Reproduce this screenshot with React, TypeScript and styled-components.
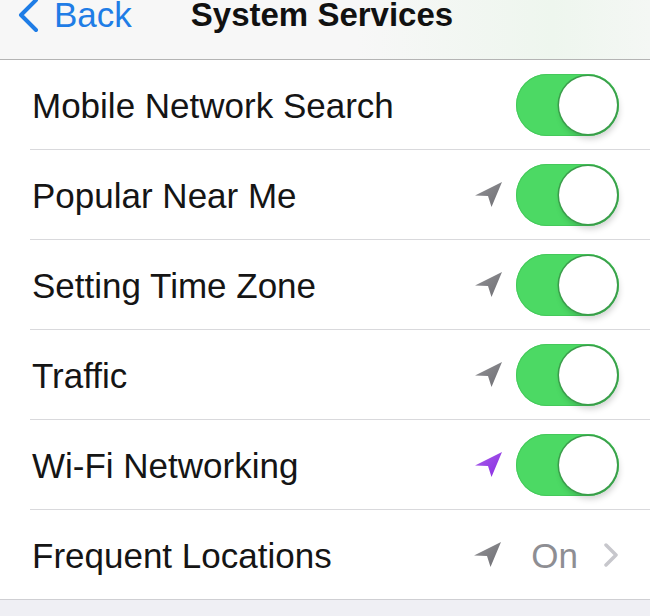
import React from "react";
import styled, { createGlobalStyle } from "styled-components";

const Global = createGlobalStyle`
  html, body { margin: 0; padding: 0; }
  body {
    background: #efeff4;
    font-family: "Liberation Sans", Arial, sans-serif;
    -webkit-font-smoothing: antialiased;
  }
`;

const Page = styled.div`
  width: 650px;
  height: 616px;
  background: #efeff4;
  overflow: hidden;
`;

const NavBar = styled.header`
  height: 59px;
  border-bottom: 1px solid #b4b4b4;
  background: linear-gradient(90deg, #f7f7f7 0%, #f7f7f7 55%, #eef6ee 85%, #f4f7f4 100%);
  display: flex;
  align-items: flex-start;
`;

const BackButton = styled.div`
  display: flex;
  align-items: flex-start;
  gap: 14px;
  padding-left: 16px;
  color: #1f7de6;
  font-size: 35px;
  line-height: 30px;
`;

const Title = styled.div`
  margin-left: 59px;
  font-size: 33px;
  font-weight: bold;
  color: #111;
  line-height: 30px;
`;

const List = styled.div`
  background: #fff;
  border-bottom: 1px solid #cfcfd3;
`;

const Row = styled.div<{ $last?: boolean }>`
  height: 89px;
  display: flex;
  align-items: center;
  padding-left: 32px;
  padding-right: 31px;
  position: relative;
  &::after {
    content: "";
    display: ${(p) => (p.$last ? "none" : "block")};
    position: absolute;
    left: 30px;
    right: 0;
    bottom: -1px;
    height: 1px;
    background: #d9d9dc;
  }
  & + & {
    margin-top: 1px;
  }
`;

const Label = styled.div`
  flex: 1;
  font-size: 35px;
  color: #151515;
  padding-top: 2px;
`;

const Accessory = styled.div`
  display: flex;
  align-items: center;
`;

const ArrowBox = styled.div<{ $gap: number }>`
  width: 30px;
  height: 28px;
  margin-right: ${(p) => p.$gap}px;
  display: flex;
`;

const Toggle = styled.div`
  width: 103px;
  height: 62px;
  border-radius: 31px;
  background: #4cd964;
  box-shadow: inset 0 0 0 1px #45c95b;
  display: flex;
  justify-content: flex-end;
  align-items: center;
`;

const Knob = styled.div`
  width: 58px;
  height: 58px;
  border-radius: 50%;
  background: #fff;
  margin-right: 2px;
  box-shadow: 0 0 0 1.5px #3a9d4a, 2px 5px 6px rgba(0, 0, 0, 0.18);
`;

const Value = styled.div`
  font-size: 35px;
  color: #8e8e93;
  margin-right: 25px;
  padding-top: 2px;
`;

const Chevron = styled.div`
  width: 16px;
  height: 24px;
  display: flex;
`;

const Arrow = ({ color }: { color: string }) => {
  const id = `g${color.replace("#", "")}`;
  return (
    <svg width="30" height="28" viewBox="0 0 30 28">
      <defs>
        <linearGradient id={id} x1="0" y1="0" x2="1" y2="1">
          <stop offset="0" stopColor={color} stopOpacity="0.75" />
          <stop offset="1" stopColor={color} />
        </linearGradient>
      </defs>
      <path d="M28 1 L1 14.5 L14 15 L17.5 26 Z" fill={`url(#${id})`} />
    </svg>
  );
};

type Item = { label: string; arrow?: string; value?: string };

const items: Item[] = [
  { label: "Mobile Network Search" },
  { label: "Popular Near Me", arrow: "#6e6e73" },
  { label: "Setting Time Zone", arrow: "#6e6e73" },
  { label: "Traffic", arrow: "#6e6e73" },
  { label: "Wi-Fi Networking", arrow: "#8a2be2" },
  { label: "Frequent Locations", arrow: "#6e6e73", value: "On" },
];

export default function App() {
  return (
    <Page>
      <Global />
      <NavBar>
        <BackButton>
          <svg width="24" height="36" viewBox="0 0 24 36" style={{ marginTop: -3 }}>
            <path d="M20 3 L5 18 L20 33" fill="none" stroke="#1f7de6" strokeWidth="4" strokeLinecap="round" strokeLinejoin="round" />
          </svg>
          Back
        </BackButton>
        <Title>System Services</Title>
      </NavBar>
      <List>
        {items.map((it, i) => (
          <Row key={it.label} $last={i === items.length - 1}>
            <Label>{it.label}</Label>
            <Accessory>
              {it.arrow && (
                <ArrowBox $gap={it.value ? 28 : 12}>
                  <Arrow color={it.arrow} />
                </ArrowBox>
              )}
              {it.value ? (
                <>
                  <Value>{it.value}</Value>
                  <Chevron>
                    <svg width="16" height="24" viewBox="0 0 16 24">
                      <path d="M3 2 L13 12 L3 22" fill="none" stroke="#c7c7cc" strokeWidth="3.5" strokeLinecap="round" strokeLinejoin="round" />
                    </svg>
                  </Chevron>
                </>
              ) : (
                <Toggle>
                  <Knob />
                </Toggle>
              )}
            </Accessory>
          </Row>
        ))}
      </List>
    </Page>
  );
}
